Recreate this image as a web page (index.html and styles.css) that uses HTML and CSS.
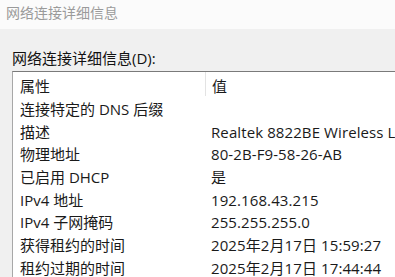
FILE: index.html
```html
<!DOCTYPE html>
<html lang="zh-CN">
<head>
<meta charset="utf-8">
<title>网络连接详细信息</title>
<link rel="stylesheet" href="styles.css">
</head>
<body>
<div class="window">
  <div class="titlebar">网络连接详细信息</div>
  <div class="content">
    <div class="label">网络连接详细信息(D):</div>
    <div class="listbox">
      <div class="row header">
        <div class="c1">属性</div>
        <div class="c2">值</div>
      </div>
      <div class="row"><div class="c1">连接特定的 DNS 后缀</div><div class="c2"></div></div>
      <div class="row"><div class="c1">描述</div><div class="c2">Realtek 8822BE Wireless LAN 802.11ac PCI-E NIC</div></div>
      <div class="row"><div class="c1">物理地址</div><div class="c2">80-2B-F9-58-26-AB</div></div>
      <div class="row"><div class="c1">已启用 DHCP</div><div class="c2">是</div></div>
      <div class="row"><div class="c1">IPv4 地址</div><div class="c2">192.168.43.215</div></div>
      <div class="row"><div class="c1">IPv4 子网掩码</div><div class="c2">255.255.255.0</div></div>
      <div class="row"><div class="c1">获得租约的时间</div><div class="c2">2025年2月17日 15:59:27</div></div>
      <div class="row"><div class="c1">租约过期的时间</div><div class="c2">2025年2月17日 17:44:44</div></div>
    </div>
  </div>
</div>
</body>
</html>
```
FILE: styles.css
```css
html, body {
  margin: 0;
  padding: 0;
  overflow: hidden;
}
body {
  width: 395px;
  height: 277px;
  font-family: "Open Sans", "Noto Sans CJK SC", sans-serif;
  background: #f0f0f0;
}
.window {
  display: flex;
  flex-direction: column;
  height: 277px;
  overflow: hidden;
}
.titlebar {
  height: 29px;
  flex: none;
  background: #fbfbfb;
  color: #9a9a9a;
  font-size: 14px;
  line-height: 26px;
  padding-left: 6px;
  white-space: nowrap;
}
.content {
  flex: 1;
  min-height: 0;
  display: flex;
  flex-direction: column;
  background: #f0f0f0;
  padding: 19px 0 0 12px;
}
.label {
  font-size: 15px;
  line-height: 20px;
  color: #111;
  white-space: nowrap;
  margin-bottom: 3px;
}
.listbox {
  flex: 1;
  min-height: 0;
  overflow: hidden;
  background: #fff;
  border-left: 1px solid #a8a8a8;
  border-top: 1px solid #7a7a7a;
}
.row {
  display: flex;
  height: 22.7px;
  line-height: 22.7px;
  font-size: 15px;
  color: #1a1a1a;
  white-space: nowrap;
}
.row.header {
  height: 26px;
  line-height: 28px;
}
.c1 {
  width: 185px;
  padding-left: 7px;
  flex: none;
}
.c2 {
  padding-left: 6px;
  letter-spacing: 0.1px;
}
.header .c1 {
  border-right: 1px solid #e3e3e3;
  height: 24px;
}
```
